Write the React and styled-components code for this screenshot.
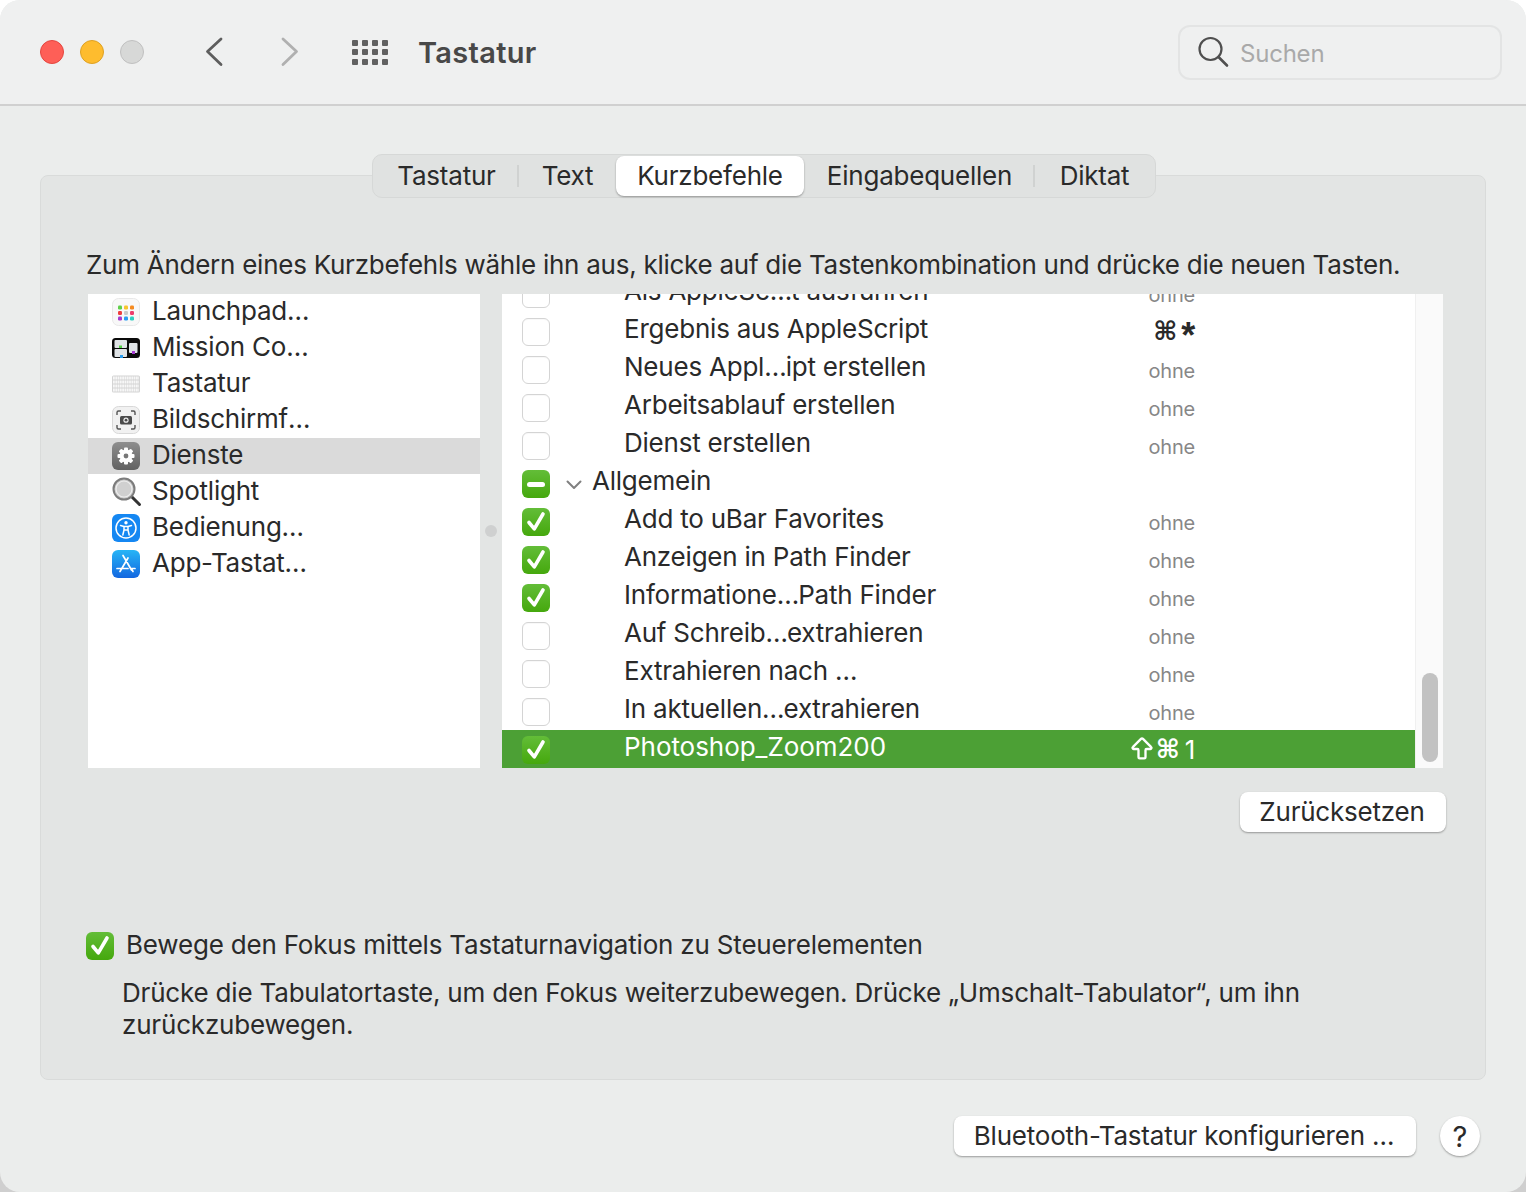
import React from "react";
import styled, { createGlobalStyle } from "styled-components";
import { ArrowBigUp } from "lucide-react";

const GlobalStyle = createGlobalStyle`
  html, body {
    margin: 0;
    padding: 0;
    background: linear-gradient(#fff 50%, #cfcfcf 50%);
  }
  * {
    box-sizing: border-box;
  }
`;

const leftItems = [
  { name: "Launchpad…", icon: "launchpad" },
  { name: "Mission Co…", icon: "mission" },
  { name: "Tastatur", icon: "keyboard" },
  { name: "Bildschirmf…", icon: "screenshot" },
  { name: "Dienste", icon: "gear", active: true },
  { name: "Spotlight", icon: "spotlight" },
  { name: "Bedienung…", icon: "access" },
  { name: "App-Tastat…", icon: "appstore" },
];

const rightItems = [
  { label: "Als AppleSc…t ausführen", keys: "ohne", state: "off" },
  { label: "Ergebnis aus AppleScript", keys: "star", state: "off" },
  { label: "Neues Appl…ipt erstellen", keys: "ohne", state: "off" },
  { label: "Arbeitsablauf erstellen", keys: "ohne", state: "off" },
  { label: "Dienst erstellen", keys: "ohne", state: "off" },
  { label: "Allgemein", state: "mixed", group: true },
  { label: "Add to uBar Favorites", keys: "ohne", state: "on" },
  { label: "Anzeigen in Path Finder", keys: "ohne", state: "on" },
  { label: "Informatione…Path Finder", keys: "ohne", state: "on" },
  { label: "Auf Schreib…extrahieren", keys: "ohne", state: "off" },
  { label: "Extrahieren nach …", keys: "ohne", state: "off" },
  { label: "In aktuellen…extrahieren", keys: "ohne", state: "off" },
  { label: "Photoshop_Zoom200", keys: "one", state: "on", selected: true },
];

const tabs = [
  { name: "Tastatur", width: 145, sep: true },
  { name: "Text", width: 97 },
  { name: "Kurzbefehle", width: 188, active: true },
  { name: "Eingabequellen", width: 231, sep: true },
  { name: "Diktat", width: 119 },
];

// the ellipsis of the system font is narrower than Inter's
function Truncated({ text }) {
  const parts = text.split("…");
  if (parts.length === 1) return text;
  return (
    <>
      {parts[0]}
      <Dots>…</Dots>
      {parts[1]}
    </>
  );
}

function ListIcon({ type }) {
  if (type === "launchpad") {
    const colors = ["#5fd04a", "#f7c52d", "#f58a1f", "#ef3d3d", "#c9c9c9", "#ee3d6c", "#a53cd0", "#2a9df0", "#2fcfc0"];
    return (
      <svg width="28" height="28" viewBox="0 0 28 28">
        <rect x="0.5" y="0.5" width="27" height="27" rx="6" fill="#f8f8f8" stroke="#e8e8e8" />
        {colors.map((c, i) => (
          <rect key={i} x={6 + (i % 3) * 6} y={7.5 + Math.floor(i / 3) * 5.5} width="4" height="4" rx="1.2" fill={c} />
        ))}
      </svg>
    );
  }
  if (type === "mission") {
    return (
      <svg width="28" height="28" viewBox="0 0 28 28">
        <rect x="0" y="4" width="28" height="20" rx="3.5" fill="#0a0a0a" />
        <rect x="2.5" y="6" width="12.5" height="8" rx="1" fill="#dfe3e6" />
        <rect x="2.5" y="15" width="12.5" height="8" rx="1" fill="#dfe3e6" />
        <rect x="17" y="9" width="8.500" height="10" rx="1" fill="#dfe3e6" />
        <rect x="7" y="11.500" width="3" height="2.500" fill="#52d044" />
        <rect x="8" y="21" width="3" height="3" fill="#2a9df0" />
        <rect x="20" y="17" width="3" height="3" fill="#a53cd0" />
      </svg>
    );
  }
  if (type === "keyboard") {
    return (
      <svg width="28" height="28" viewBox="0 0 28 28">
        <rect x="0" y="5.500" width="28" height="17" rx="1.500" fill="#d4d4d4" />
        {[0, 1, 2, 3].map((r) => (
          <line key={r} x1="1" x2="27" y1={8 + r * 4} y2={8 + r * 4} stroke="#f7f7f7" strokeWidth="3" strokeDasharray="1.800 0.500" />
        ))}
      </svg>
    );
  }
  if (type === "screenshot") {
    return (
      <svg width="28" height="28" viewBox="0 0 28 28">
        <rect x="0.5" y="0.5" width="27" height="27" rx="6" fill="#f1f1f1" stroke="#d8d8d8" />
        <path d="M5 9V6.500A1.500 1.500 0 0 1 6.500 5H9M19 5h2.500A1.500 1.500 0 0 1 23 6.500V9M23 19v2.500A1.500 1.500 0 0 1 21.500 23H19M9 23H6.500A1.500 1.500 0 0 1 5 21.500V19" fill="none" stroke="#555" strokeWidth="1.400" />
        <rect x="8" y="10" width="12" height="8.500" rx="1.500" fill="#4a4a4a" />
        <circle cx="14" cy="14.200" r="2.600" fill="#eee" />
        <circle cx="14" cy="14.200" r="1.400" fill="#4a4a4a" />
      </svg>
    );
  }
  if (type === "gear") {
    return (
      <svg width="28" height="28" viewBox="0 0 28 28">
        <defs>
          <linearGradient id="gearBg" x1="0" y1="0" x2="0" y2="1">
            <stop offset="0" stopColor="#8e8e8e" />
            <stop offset="1" stopColor="#626262" />
          </linearGradient>
        </defs>
        <rect width="28" height="28" rx="6" fill="url(#gearBg)" />
        {[0, 45, 90, 135].map((a) => (
          <rect key={a} x="12" y="5.500" width="4" height="17" rx="1" fill="#fff" transform={`rotate(${a} 14 14)`} />
        ))}
        <circle cx="14" cy="14" r="6.500" fill="#fff" />
        <circle cx="14" cy="14" r="2.400" fill="#777" />
      </svg>
    );
  }
  if (type === "spotlight") {
    return (
      <svg width="30" height="30" viewBox="0 0 30 30">
        <line x1="19" y1="19" x2="27.500" y2="27.500" stroke="#333" strokeWidth="3" strokeLinecap="round" />
        <circle cx="12" cy="12" r="10.500" fill="#c9c9c9" stroke="#7c7c7c" strokeWidth="2" />
        <circle cx="12" cy="12" r="8" fill="#d0d0d0" stroke="#efefef" strokeWidth="1.200" />
      </svg>
    );
  }
  if (type === "access") {
    return (
      <svg width="28" height="28" viewBox="0 0 28 28">
        <rect width="28" height="28" rx="6" fill="#1587f2" />
        <circle cx="14" cy="14" r="10" fill="none" stroke="#fff" strokeWidth="1.500" />
        <circle cx="14" cy="8.800" r="1.700" fill="#fff" />
        <path d="M8.500 11.500 12 12.500V16L10.800 21M19.500 11.500 16 12.500V16L17.200 21M12 12.500h4M12.500 16h3" fill="none" stroke="#fff" strokeWidth="1.500" strokeLinecap="round" strokeLinejoin="round" />
      </svg>
    );
  }
  return (
    <svg width="28" height="28" viewBox="0 0 28 28">
      <defs>
        <linearGradient id="storeBg" x1="0" y1="0" x2="0" y2="1">
          <stop offset="0" stopColor="#27b5f6" />
          <stop offset="1" stopColor="#1367e0" />
        </linearGradient>
      </defs>
      <rect width="28" height="28" rx="6" fill="url(#storeBg)" />
      <path d="M11 5.500 19.500 20M16 8 8 21.500M5 18.500h11M18.500 18.500H23M21 21.500 19.500 19" fill="none" stroke="#fff" strokeWidth="1.700" strokeLinecap="round" />
    </svg>
  );
}

function CheckBox({ state }) {
  return (
    <Box $state={state}>
      {state === "on" && (
        <svg width="28" height="28" viewBox="0 0 28 28">
          <path d="M7 14.500 12.300 20.800 21 6" fill="none" stroke="#fff" strokeWidth="3.600" strokeLinecap="round" strokeLinejoin="round" />
        </svg>
      )}
      {state === "mixed" && <Dash />}
    </Box>
  );
}

export default function App() {
  return (
    <>
      <GlobalStyle />
      <Window>
        <TitleBar>
          <Lights>
            <Light $bg="#fe5f57" $line="#e4463f" />
            <Light $bg="#febc2e" $line="#dea123" />
            <Light $bg="#d7d8d7" $line="#c0c0c0" />
          </Lights>
          <NavButton>
            <svg width="20" height="30" viewBox="0 0 20 30">
              <path d="M17 2.500 3.500 15 17 28" fill="none" stroke="#5e5e5e" strokeWidth="2.800" strokeLinecap="round" strokeLinejoin="round" transform="translate(0 -0.500)" />
            </svg>
          </NavButton>
          <NavButton $next>
            <svg width="20" height="30" viewBox="0 0 20 30">
              <path d="M3 2.500 16.500 15 3 28" fill="none" stroke="#b0b0b0" strokeWidth="2.800" strokeLinecap="round" strokeLinejoin="round" transform="translate(0 -0.500)" />
            </svg>
          </NavButton>
          <GridIcon>
            {Array.from({ length: 12 }).map((_, i) => (
              <GridDot key={i} />
            ))}
          </GridIcon>
          <Title>Tastatur</Title>
          <SearchBox>
            <svg width="32" height="32" viewBox="0 0 32 32">
              <circle cx="13.500" cy="13" r="11" fill="none" stroke="#4f4f4f" strokeWidth="2.200" />
              <line x1="21.500" y1="21" x2="30" y2="29.500" stroke="#4f4f4f" strokeWidth="2.600" strokeLinecap="round" />
            </svg>
            <SearchText>Suchen</SearchText>
          </SearchBox>
        </TitleBar>
        <Body>
          <Panel>
            <TabBar>
              {tabs.map((t) => (
                <Tab key={t.name} $w={t.width} $active={t.active} $sep={t.sep}>
                  {t.name}
                </Tab>
              ))}
            </TabBar>
            <Hint>Zum Ändern eines Kurzbefehls wähle ihn aus, klicke auf die Tastenkombination und drücke die neuen Tasten.</Hint>
            <Lists>
              <LeftList>
                {leftItems.map((item) => (
                  <LeftRow key={item.name} $active={item.active}>
                    <IconSlot>
                      <ListIcon type={item.icon} />
                    </IconSlot>
                    <LeftName>
                      <Truncated text={item.name} />
                    </LeftName>
                  </LeftRow>
                ))}
              </LeftList>
              <Divider>
                <DividerDot />
              </Divider>
              <RightList>
                <RightScroll>
                  {rightItems.map((row) => (
                    <RightRow key={row.label} $selected={row.selected}>
                      <CheckBox state={row.state} />
                      {row.group && (
                        <Chevron width="16" height="10" viewBox="0 0 16 10">
                          <path d="M1.500 1.500 8 8 14.500 1.500" fill="none" stroke="#808080" strokeWidth="2" strokeLinecap="round" strokeLinejoin="round" />
                        </Chevron>
                      )}
                      <RowLabel $group={row.group} $selected={row.selected}>
                        <Truncated text={row.label} />
                      </RowLabel>
                      {row.keys === "ohne" && <NoKeys>ohne</NoKeys>}
                      {row.keys === "star" && (
                        <Keys>
                          <CmdGlyph>⌘</CmdGlyph>
                          <StarGlyph>*</StarGlyph>
                        </Keys>
                      )}
                      {row.keys === "one" && (
                        <Keys $selected>
                          <ArrowBigUp size={28} strokeWidth={2} />
                          <CmdGlyph>⌘</CmdGlyph>
                          <OneGlyph>1</OneGlyph>
                        </Keys>
                      )}
                    </RightRow>
                  ))}
                </RightScroll>
                <Track>
                  <Thumb />
                </Track>
              </RightList>
            </Lists>
            <ResetRow>
              <PushButton $w={206}>Zurücksetzen</PushButton>
            </ResetRow>
            <FocusRow>
              <CheckBox state="on" />
              <FocusLabel>Bewege den Fokus mittels Tastaturnavigation zu Steuerelementen</FocusLabel>
            </FocusRow>
            <FocusNote>
              Drücke die Tabulatortaste, um den Fokus weiterzubewegen. Drücke „Umschalt-Tabulator“, um ihn zurückzubewegen.
            </FocusNote>
          </Panel>
          <Footer>
            <PushButton $w={462}>Bluetooth-Tastatur konfigurieren …</PushButton>
            <HelpButton>?</HelpButton>
          </Footer>
        </Body>
      </Window>
    </>
  );
}

const Window = styled.div`
  width: 1526px;
  height: 1192px;
  overflow: hidden;
  border-radius: 20px;
  background: #ebedec;
  font-family: Inter, "Liberation Sans", sans-serif;
  font-size: 26px;
  letter-spacing: -0.22px;
  color: #2a2a2a;
`;

const TitleBar = styled.header`
  height: 106px;
  display: flex;
  align-items: center;
  padding: 0 24px 0 40px;
  background: #eff0f0;
  border-bottom: 2px solid #d0d0d0;
`;

const Lights = styled.div`
  display: flex;
  gap: 16px;
`;

const Light = styled.span`
  width: 24px;
  height: 24px;
  border-radius: 50%;
  background: ${(p) => p.$bg};
  border: 1px solid ${(p) => p.$line};
`;

const NavButton = styled.div`
  display: flex;
  margin-left: ${(p) => (p.$next ? "56px" : "60px")};
`;

const GridIcon = styled.div`
  display: grid;
  grid-template-columns: repeat(4, 6px);
  grid-auto-rows: 6px;
  gap: 3.500px 4px;
  margin-left: 52px;
`;

const GridDot = styled.span`
  background: #616161;
  border-radius: 1px;
`;

const Title = styled.h1`
  margin: 0 0 0 30px;
  font-size: 29px;
  font-weight: 600;
  letter-spacing: 0.3px;
  color: #484848;
`;

const SearchBox = styled.div`
  margin-left: auto;
  width: 324px;
  height: 55px;
  display: flex;
  align-items: center;
  gap: 11px;
  padding: 0 0 0 17px;
  border: 2px solid #e3e4e4;
  border-radius: 12px;
`;

const SearchText = styled.span`
  font-size: 24px;
  color: #a9a9a9;
  padding-top: 3px;
`;

const Body = styled.main`
  padding: 69px 40px 0;
`;

const Panel = styled.section`
  height: 905px;
  padding: 0 42px 0 47px;
  background: #e3e5e4;
  border: 1px solid #d9dbda;
  border-radius: 8px;
`;

const TabBar = styled.nav`
  width: 784px;
  height: 44px;
  margin: -22px 0 0 284px;
  padding: 1px;
  display: flex;
  background: #e0e2e1;
  border: 1px solid #d6d8d7;
  border-radius: 10px;
`;

const Tab = styled.div`
  position: relative;
  width: ${(p) => p.$w}px;
  padding-bottom: 2px;
  display: flex;
  align-items: center;
  justify-content: center;
  border-radius: 8px;
  background: ${(p) => (p.$active ? "#fff" : "transparent")};
  box-shadow: ${(p) => (p.$active ? "0 1px 2px rgba(0,0,0,0.35)" : "none")};

  &::after {
    content: "";
    display: ${(p) => (p.$sep ? "block" : "none")};
    position: absolute;
    right: 0;
    top: 9px;
    bottom: 9px;
    width: 2px;
    background: #d0d2d1;
  }
`;

const Hint = styled.p`
  margin: 51px 0 0 -2px;
  height: 32px;
  line-height: 32px;
  letter-spacing: -0.26px;
  white-space: nowrap;
`;

const Lists = styled.div`
  display: flex;
  height: 474px;
  margin-top: 13px;
`;

const LeftList = styled.div`
  width: 392px;
  background: #fff;
  overflow: hidden;
`;

const LeftRow = styled.div`
  height: 36px;
  display: flex;
  align-items: center;
  padding-left: 24px;
  background: ${(p) => (p.$active ? "#dadada" : "transparent")};
`;

const LeftName = styled.span`
  padding-bottom: 4px;
`;

const Dots = styled.span`
  letter-spacing: -3px;
  margin-right: 2px;
`;

const IconSlot = styled.span`
  width: 40px;
  height: 30px;
  display: flex;
  align-items: center;
`;

const Divider = styled.div`
  width: 22px;
  display: flex;
  align-items: center;
  justify-content: center;
`;

const DividerDot = styled.span`
  width: 12px;
  height: 12px;
  border-radius: 50%;
  background: #cfd0d0;
`;

const RightList = styled.div`
  flex: 1;
  display: flex;
  background: #fff;
  overflow: hidden;
`;

const RightScroll = styled.div`
  flex: 1;
  margin-top: -20px;
`;

const RightRow = styled.div`
  height: 38px;
  display: flex;
  align-items: center;
  padding-left: 20px;
  background: ${(p) => (p.$selected ? "#4ca035" : "transparent")};
  color: ${(p) => (p.$selected ? "#fff" : "inherit")};
`;

const Box = styled.span`
  flex: none;
  width: 28px;
  height: 28px;
  display: flex;
  align-items: center;
  justify-content: center;
  border-radius: 6px;
  margin-top: 2px;
  background: ${(p) => (p.$state === "off" ? "#fff" : "linear-gradient(#63bd38, #45a80d)")};
  border: ${(p) => (p.$state === "off" ? "1.5px solid #d4d4d4" : "none")};
  box-shadow: ${(p) => (p.$state === "off" ? "inset 0 1px 1px rgba(0,0,0,0.03)" : "none")};
`;

const Dash = styled.span`
  width: 18px;
  height: 5px;
  border-radius: 3px;
  background: #fff;
`;

const Chevron = styled.svg`
  margin-left: 16px;
  margin-top: 3px;
`;

const RowLabel = styled.span`
  margin-left: ${(p) => (p.$group ? "10px" : "74px")};
  padding-bottom: 5px;
  letter-spacing: ${(p) => (p.$selected ? "-0.05px" : "inherit")};
  white-space: nowrap;
`;

const NoKeys = styled.span`
  margin-left: auto;
  padding-right: 220px;
  padding-top: 4px;
  font-size: 20px;
  color: #878787;
`;

const Keys = styled.span`
  margin-left: auto;
  margin-right: 220px;
  display: flex;
  align-items: center;
  color: ${(p) => (p.$selected ? "#fff" : "#2a2a2a")};
`;

const CmdGlyph = styled.span`
  font-family: "DejaVu Sans", sans-serif;
  font-size: 26px;
  font-weight: 700;
  line-height: 30px;
`;

const StarGlyph = styled.span`
  margin-left: 4px;
  font-family: "Liberation Sans", sans-serif;
  font-size: 36px;
  font-weight: 700;
  line-height: 30px;
  height: 30px;
  padding-top: 5px;
`;

const OneGlyph = styled.span`
  margin-left: 5px;
`;

const Track = styled.div`
  width: 28px;
  padding: 379px 5px 6px 6px;
  background: #fafafa;
  border-left: 1px solid #f0f0f0;
`;

const Thumb = styled.div`
  height: 89px;
  border-radius: 8px;
  background: #c2c2c2;
`;

const ResetRow = styled.div`
  display: flex;
  justify-content: flex-end;
  margin: 24px -3px 0 0;
`;

const PushButton = styled.button`
  width: ${(p) => p.$w}px;
  height: 40px;
  padding: 0 2px 2px 0;
  border: none;
  border-radius: 8px;
  background: #fff;
  box-shadow: 0 1px 2px rgba(0, 0, 0, 0.35);
  font: inherit;
  letter-spacing: inherit;
  color: inherit;
`;

const FocusRow = styled.div`
  display: flex;
  align-items: center;
  gap: 12px;
  margin: 97px 0 0 -2px;
`;

const FocusLabel = styled.span`
  letter-spacing: -0.19px;
  white-space: nowrap;
`;

const FocusNote = styled.p`
  margin: 17px 100px 0 34px;
  line-height: 32px;
  letter-spacing: -0.19px;
`;

const Footer = styled.footer`
  display: flex;
  align-items: center;
  justify-content: flex-end;
  gap: 24px;
  margin-top: 36px;
  padding-right: 6px;
`;

const HelpButton = styled.button`
  width: 40px;
  height: 40px;
  padding: 0;
  border: none;
  border-radius: 50%;
  background: #fff;
  box-shadow: 0 1px 2px rgba(0, 0, 0, 0.35);
  font: inherit;
  font-size: 29px;
  color: inherit;
`;
